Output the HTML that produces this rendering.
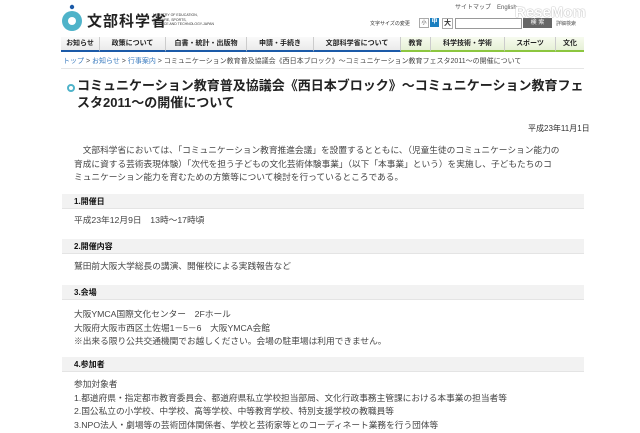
<!DOCTYPE html>
<html><head><meta charset="utf-8"><style>
body{margin:0;width:640px;height:426px;overflow:hidden;background:#fff;font-family:"Liberation Sans","Noto Sans CJK JP",sans-serif;color:#333;position:relative}
.a{position:absolute;white-space:nowrap}
.nav{position:absolute;top:37px;left:61px;width:523px;height:15px;display:flex;background:linear-gradient(#fafafa,#e8e8e8)}
.nav div{font-size:7px;font-weight:bold;text-align:center;line-height:13px;border-bottom:2px solid #1b5aa8;border-right:1px solid #ccc;box-sizing:border-box;color:#222}
.nav div.g{border-bottom-color:#8cc63f;background:linear-gradient(#f7fbef,#e6f0d6)}
.h{position:absolute;left:62px;width:522px;height:15px;background:#f2f2f2;border-bottom:1px solid #e4e4e4;font-size:8px;font-weight:bold;line-height:15px;padding-left:12px;box-sizing:border-box;color:#111}
.t{position:absolute;left:74px;font-size:8.7px;line-height:13.7px;color:#444;white-space:nowrap}
</style></head><body>
<svg class="a" style="left:60px;top:4px" width="24" height="28"><circle cx="12" cy="3" r="2.2" fill="#1b5aa8"/><circle cx="12" cy="17" r="10" fill="#4fb3c9"/><circle cx="12" cy="17" r="4" fill="#fff"/></svg>
<div class="a" style="left:87px;top:10px;font-size:15px;font-weight:bold;color:#222;letter-spacing:1px">文部科学省</div>
<div class="a" style="left:153px;top:13px;font-size:3.5px;line-height:4.5px;color:#333">MINISTRY OF EDUCATION,<br>CULTURE, SPORTS,<br>SCIENCE AND TECHNOLOGY-JAPAN</div>
<div class="a" style="left:455px;top:2px;font-size:6px;color:#555">サイトマップ　English</div>
<div class="a" style="left:515px;top:4px;font-size:15px;color:#fff;text-shadow:0 0 1px #666;font-weight:bold">ReseMom</div>
<div class="a" style="left:370px;top:20px;font-size:5px;color:#333">文字サイズの変更</div>
<div class="a" style="left:419px;top:18px;width:8px;height:8px;border:1px solid #aaa;font-size:5px;text-align:center;line-height:8px">小</div>
<div class="a" style="left:430px;top:18px;width:9px;height:9px;background:#1b7fc0;color:#fff;font-size:6px;text-align:center;line-height:9px;font-weight:bold">中</div>
<div class="a" style="left:442px;top:18px;width:9px;height:9px;border:1px solid #aaa;font-size:7px;text-align:center;line-height:9px;font-weight:bold">大</div>
<div class="a" style="left:455px;top:18px;width:65px;height:9px;border:1px solid #999;background:#fff"></div>
<div class="a" style="left:523px;top:18px;width:29px;height:10px;background:#666;color:#fff;font-size:6px;text-align:center;line-height:10px">検 索</div>
<div class="a" style="left:556px;top:20px;font-size:5px;color:#555">詳細検索</div>
<div class="nav">
<div style="width:39px">お知らせ</div><div style="width:66px">政策について</div><div style="width:81px">白書・統計・出版物</div><div style="width:67px">申請・手続き</div><div style="width:87px">文部科学省について</div><div class="g" style="width:30px">教育</div><div class="g" style="width:74px">科学技術・学術</div><div class="g" style="width:51px">スポーツ</div><div class="g" style="width:28px;border-right:none">文化</div>
</div>
<div class="a" style="left:63px;top:56px;font-size:7px;color:#444"><span style="color:#3a7bbf">トップ</span> &gt; <span style="color:#3a7bbf">お知らせ</span> &gt; <span style="color:#3a7bbf">行事案内</span> &gt; コミュニケーション教育普及協議会《西日本ブロック》～コミュニケーション教育フェスタ2011～の開催について</div>
<div class="a" style="left:61px;top:68px;width:523px;height:1px;background:#e6e6e6"></div>
<div class="a" style="left:67px;top:84px;width:4px;height:4px;border:2px solid #4fb3c9;border-radius:50%"></div>
<div class="a" style="left:77px;top:77px;font-size:13px;line-height:17px;font-weight:bold;color:#222;white-space:nowrap">コミュニケーション教育普及協議会《西日本ブロック》～コミュニケーション教育フェ<br>スタ2011～の開催について</div>
<div class="a" style="left:528px;top:123px;font-size:8px;color:#333">平成23年11月1日</div>
<div class="t" style="left:74px;top:144px">　文部科学省においては、「コミュニケーション教育推進会議」を設置するとともに、（児童生徒のコミュニケーション能力の<br>育成に資する芸術表現体験）「次代を担う子どもの文化芸術体験事業」（以下「本事業」という）を実施し、子どもたちのコ<br>ミュニケーション能力を育むための方策等について検討を行っているところである。</div>
<div class="h" style="top:194px">1.開催日</div>
<div class="t" style="top:214px">平成23年12月9日　13時～17時頃</div>
<div class="h" style="top:239px">2.開催内容</div>
<div class="t" style="top:260px">鷲田前大阪大学総長の講演、開催校による実践報告など</div>
<div class="h" style="top:285px">3.会場</div>
<div class="t" style="top:308px">大阪YMCA国際文化センター　2Fホール<br>大阪府大阪市西区土佐堀1－5－6　大阪YMCA会館<br>※出来る限り公共交通機関でお越しください。会場の駐車場は利用できません。</div>
<div class="h" style="top:357px">4.参加者</div>
<div class="t" style="top:378px">参加対象者<br>1.都道府県・指定都市教育委員会、都道府県私立学校担当部局、文化行政事務主管課における本事業の担当者等<br>2.国公私立の小学校、中学校、高等学校、中等教育学校、特別支援学校の教職員等<br>3.NPO法人・劇場等の芸術団体関係者、学校と芸術家等とのコーディネート業務を行う団体等</div>
</body></html>
